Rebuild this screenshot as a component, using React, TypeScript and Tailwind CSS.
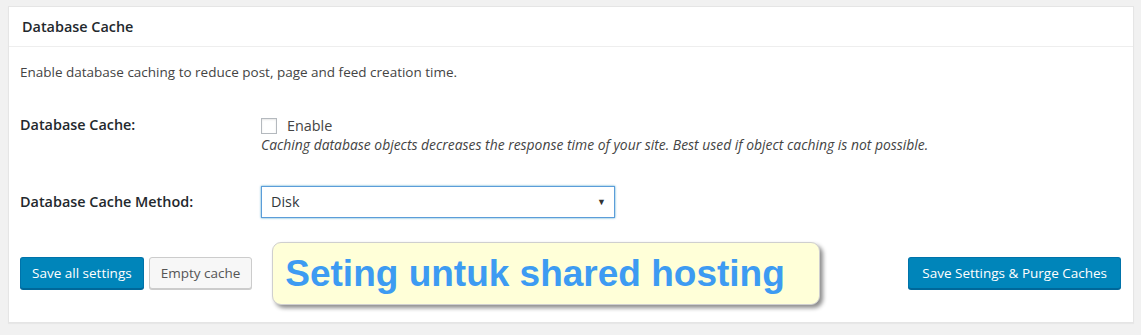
import React from "react";

export default function App() {
  const font = { fontFamily: '"Open Sans", "Noto Sans", Arial, sans-serif' };
  return (
    <div className="w-[1141px] h-[335px] bg-[#f1f1f1] pt-[6px] pl-[8px]" style={font}>
      <div className="w-[1126px] h-[317px] bg-white border border-[#e5e5e5] shadow-[0_1px_1px_rgba(0,0,0,0.04)] flex flex-col">
        <div className="h-[40px] border-b border-[#eeeeee] flex items-center pl-[13px]">
          <span className="text-[14.4px] font-semibold text-[#23282d]">Database Cache</span>
        </div>
        <div className="pl-[11px] pr-[12px] flex flex-col">
          <p className="text-[13.5px] text-[#444] mt-[15px] leading-[20px]">
            Enable database caching to reduce post, page and feed creation time.
          </p>
          <div className="flex mt-[32px]">
            <div className="w-[241px] text-[14.4px] font-semibold text-[#23282d] leading-[20px] pt-[1px]">Database Cache:</div>
            <div className="flex flex-col">
              <label className="flex items-center h-[22px] pt-[1px]">
                <span className="w-[16px] h-[16px] border border-[#b4b9be] bg-white shadow-[inset_0_1px_2px_rgba(0,0,0,0.1)]" />
                <span className="ml-[10px] text-[14.4px] text-[#444]">Enable</span>
              </label>
              <span className="text-[13.9px] italic text-[#444] leading-[18px]">
                Caching database objects decreases the response time of your site. Best used if object caching is not possible.
              </span>
            </div>
          </div>
          <div className="flex items-center mt-[32px]">
            <div className="w-[241px] text-[14.4px] font-semibold text-[#23282d]">Database Cache Method:</div>
            <div className="w-[354px] h-[32px] border border-[#5b9dd9] shadow-[0_0_2px_rgba(30,140,190,0.8)] flex items-center justify-between pl-[9px] pr-[8px] bg-white">
              <span className="text-[14.4px] text-[#32373c]">Disk</span>
              <span className="text-[9px] text-[#333]">▼</span>
            </div>
          </div>
          <div className="flex items-center mt-[23px] h-[64px]">
            <button className="h-[32px] px-[11px] bg-[#0085ba] border border-[#0073aa] border-b-[#006799] rounded-[3px] shadow-[0_1px_0_#006799] text-white text-[13.5px]">
              Save all settings
            </button>
            <button className="h-[32px] px-[11px] ml-[5px] bg-[#f7f7f7] border border-[#cccccc] rounded-[3px] shadow-[0_1px_0_#cccccc] text-[#555] text-[13.5px]">
              Empty cache
            </button>
            <div className="ml-[20px] h-[63px] w-[548px] bg-[#ffffd8] border border-[#cfcfcf] rounded-[9px] shadow-[3px_3px_4px_rgba(0,0,0,0.45)] flex items-center pl-[12px]">
              <span className="text-[37px] font-bold text-[#3d9bf2] leading-none" style={{ fontFamily: '"Liberation Sans", Arial, sans-serif' }}>
                Seting untuk shared hosting
              </span>
            </div>
            <div className="flex-1" />
            <button className="h-[32px] px-[13px] bg-[#0085ba] border border-[#0073aa] border-b-[#006799] rounded-[3px] shadow-[0_1px_0_#006799] text-white text-[13.5px]">
              Save Settings &amp; Purge Caches
            </button>
          </div>
        </div>
      </div>
    </div>
  );
}
